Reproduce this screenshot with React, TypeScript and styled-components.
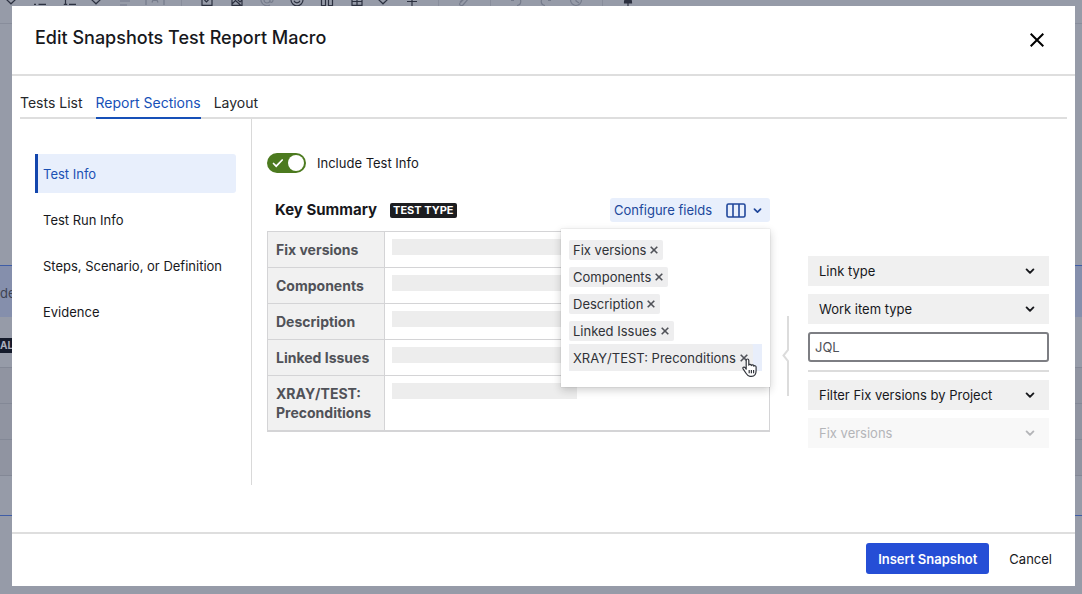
import React, { useState } from "react";
import styled, { createGlobalStyle, css } from "styled-components";

const GlobalStyle = createGlobalStyle`
  *, *::before, *::after { box-sizing: border-box; }
  body { margin: 0; background: #969ba8; }
  body, button, input, select {
    font-family: Inter, "Liberation Sans", sans-serif;
    font-size: 13px;
    line-height: 20px;
    color: #17181c;
  }
  button { border: 0; background: none; padding: 0; cursor: pointer; }
`;

/* Stage: the editor page with the dialog stacked on top of it */

const Stage = styled.div`
  display: grid;
  grid-template-columns: minmax(0, 1fr);
  min-height: 100vh;
  > * { grid-area: 1 / 1; }
`;

const EditorPage = styled.div`
  overflow: hidden;
  background: #969ba8;
`;

const Toolbar = styled.div`
  display: flex;
  align-items: center;
  height: 47px;
  margin-top: -23px;
  border-bottom: 1px solid #888d9b;
`;

const ToolSlot = styled.span<{ $kind?: "chevron" | "divider"; $faded?: boolean }>`
  display: flex;
  justify-content: center;
  flex: none;
  width: ${(p) => (p.$kind ? 22 : 30)}px;
  margin-right: ${(p) => (p.$kind === "chevron" ? 3 : 0)}px;
  color: ${(p) => (p.$faded ? "#757b8b" : "#2c3140")};
  svg { display: block; }
`;

const ToolDivider = styled.span`
  width: 1px;
  height: 24px;
  background: #888d9b;
`;

const MacroBlock = styled.div`
  margin-top: 241px;
  height: 251px;
  border-top: 1px solid #3f5da6;
  border-bottom: 1px solid #3f5da6;
`;

const MacroBar = styled.div`
  height: 51px;
  padding-top: 18px;
  background: #858fac;
  color: #3d4353;
  line-height: 18px;
`;

const MacroRow = styled.div<{ $height: number; $shade?: boolean }>`
  height: ${(p) => p.$height}px;
  border-bottom: 1px solid #838896;
  background: ${(p) => (p.$shade ? "#9094a1" : "transparent")};
`;

const ManualLozenge = styled.span`
  display: block;
  width: 14px;
  height: 15px;
  background: #151b2b;
  color: #a9aebb;
  font-size: 10px;
  font-weight: 700;
  line-height: 15px;
`;

const MacroBadgeRow = styled(MacroRow)`
  padding-top: 21px;
`;

/* Dialog */

const Dialog = styled.section`
  display: flex;
  flex-direction: column;
  margin: 6px 7px 8px 12px;
  background: #fff;
`;

const DialogHeader = styled.header`
  display: flex;
  align-items: center;
  justify-content: space-between;
  padding: 18px 29px 18px 23px;
  border-bottom: 2px solid #dedede;
`;

const Title = styled.h1`
  margin: 0;
  padding-bottom: 4px;
  font-size: 18px;
  font-weight: 500;
  line-height: 28px;
`;

const CloseButton = styled.button`
  display: flex;
  padding: 2px;
  color: #000;
`;

const DialogBody = styled.div`
  flex: 1;
  padding: 0 8px 46px;
`;

const TabList = styled.div`
  display: flex;
  gap: 13px;
  padding-top: 16px;
  border-bottom: 2px solid #dedede;
`;

const Tab = styled.button<{ $active: boolean }>`
  height: 27px;
  margin-bottom: -2px;
  padding-bottom: 4px;
  border-bottom: 2px solid ${(p) => (p.$active ? "#1650b8" : "transparent")};
  color: ${(p) => (p.$active ? "#1650b8" : "#26272b")};
  font-size: 14px;
`;

const Columns = styled.div`
  display: flex;
  align-items: flex-start;
`;

const SideNav = styled.nav`
  display: flex;
  flex-direction: column;
  gap: 7px;
  flex: none;
  width: 232px;
  min-height: 366px;
  padding: 35px 15px;
  border-right: 1px solid #d9d9d9;
`;

const NavItem = styled.button<{ $active: boolean }>`
  height: 39px;
  padding: 0 5px;
  border-left: 3px solid ${(p) => (p.$active ? "#1346ad" : "transparent")};
  border-radius: 0 3px 3px 0;
  background: ${(p) => (p.$active ? "#e8effc" : "transparent")};
  color: ${(p) => (p.$active ? "#1a50b4" : "#17181c")};
  text-align: left;
  white-space: nowrap;
`;

const Preview = styled.main`
  flex: 1;
  min-width: 0;
  padding: 34px 0 0 15px;
`;

const ToggleLabel = styled.label`
  display: flex;
  align-items: center;
  gap: 11px;
  height: 20px;
`;

const ToggleInput = styled.input`
  appearance: none;
  width: 39px;
  height: 20px;
  margin: 0;
  border-radius: 10px;
  background: #4c7a1f;
  display: grid;
  align-items: center;
  &::after {
    content: "";
    grid-area: 1 / 1;
    width: 16px;
    height: 16px;
    margin-left: 21px;
    border-radius: 50%;
    background: #fff;
  }
  &:not(:checked) { background: #777; }
  &:not(:checked)::after { margin-left: 2px; }
`;

const ToggleTrack = styled.span`
  display: grid;
  align-items: center;
  > * { grid-area: 1 / 1; }
  svg { margin-left: 5px; pointer-events: none; z-index: 1; }
`;

const SummaryBar = styled.div`
  display: flex;
  align-items: center;
  height: 24px;
  margin: 25px 0 9px;
  padding-left: 8px;
`;

const SummaryTitle = styled.h2`
  margin: 0 13px 0 0;
  font-size: 15px;
  font-weight: 700;
  line-height: 20px;
`;

const TypeLozenge = styled.span`
  padding: 0 3px;
  border-radius: 2px;
  background: #1c1d20;
  color: #fff;
  font-size: 11px;
  font-weight: 700;
  line-height: 15px;
`;

const FieldPicker = styled.div`
  position: relative;
  margin-left: auto;
`;

const PickerButton = styled.button`
  display: flex;
  align-items: center;
  height: 24px;
  padding: 0 8px 0 4px;
  border-radius: 3px;
  background: #e8effc;
  color: #20479b;
  svg:first-of-type { margin: 0 7px 0 14px; }
`;

const PickerMenu = styled.ul`
  position: absolute;
  top: 31px;
  right: 0;
  z-index: 2;
  width: 209px;
  margin: 0;
  padding: 7px 8px 16px;
  list-style: none;
  background: #fff;
  box-shadow: 0 3px 8px rgba(30, 31, 33, 0.22), 0 0 1px rgba(30, 31, 33, 0.25);
`;

const PickerRow = styled.li<{ $active?: boolean }>`
  display: flex;
  align-items: center;
  height: 27px;
  background: ${(p) => (p.$active ? "#e8eefb" : "transparent")};
`;

const FieldTag = styled.span<{ $plain?: boolean }>`
  display: flex;
  align-items: center;
  gap: 4px;
  height: 20px;
  padding: 0 5px 0 4px;
  border-radius: 2px;
  background: #eeeeef;
  color: #303237;
  white-space: nowrap;
  ${(p) =>
    p.$plain &&
    css`
      height: 27px;
    `}
`;

const RemoveButton = styled.button`
  display: flex;
  color: #505258;
`;

const HandPointer = styled.svg`
  position: absolute;
  right: 12px;
  bottom: 9px;
  pointer-events: none;
`;

const FieldTable = styled.table`
  width: 100%;
  border-collapse: collapse;
  border: 1px solid #d4d4d6;
  border-bottom-width: 2px;
  th, td { border: 1px solid #d4d4d6; vertical-align: top; }
  th {
    width: 117px;
    padding: 8px;
    background: #f1f1f1;
    color: #505258;
    font-size: 14px;
    font-weight: 700;
    line-height: 19px;
    text-align: left;
  }
  td { padding: 7px; }
`;

const Placeholder = styled.div`
  width: 185px;
  max-width: 100%;
  height: 16px;
  background: #ededed;
`;

const FilterGroup = styled.div`
  display: flex;
  flex: none;
  padding: 137px 18px 0 12px;
`;

const Bracket = styled.svg`
  flex: none;
  margin: 60px 19px 0 0;
`;

const Filters = styled.form`
  display: flex;
  flex-direction: column;
  gap: 8px;
  width: 241px;
`;

const SelectBox = styled.div<{ $disabled?: boolean }>`
  display: grid;
  align-items: center;
  height: 30px;
  background: ${(p) => (p.$disabled ? "#f8f8f8" : "#f0f0f0")};
  color: ${(p) => (p.$disabled ? "#b4b5b8" : "#17181c")};
  > * { grid-area: 1 / 1; }
  svg { justify-self: end; margin-right: 14px; pointer-events: none; }
`;

const Select = styled.select`
  appearance: none;
  width: 100%;
  height: 30px;
  padding: 0 32px 0 11px;
  border: 0;
  background: transparent;
  color: inherit;
  opacity: 1;
`;

const QueryInput = styled.input`
  height: 30px;
  padding: 0 5px;
  border: 2px solid #7d7e83;
  border-radius: 3px;
  background: #fff;
  &::placeholder { color: #505258; opacity: 1; }
`;

const Rule = styled.hr`
  width: 100%;
  height: 2px;
  margin: 0;
  border: 0;
  background: #dcdcdc;
`;

const DialogFooter = styled.footer`
  display: flex;
  justify-content: flex-end;
  gap: 8px;
  padding: 9px 11px 12px;
  border-top: 2px solid #dedede;
`;

const FooterButton = styled.button<{ $primary?: boolean }>`
  height: 31px;
  padding: 0 12px;
  border-radius: 3px;
  ${(p) =>
    p.$primary &&
    css`
      background: #254ed6;
      color: #fff;
      font-weight: 600;
    `}
`;

/* Icons */

const Chevron = ({ size = 9 }: { size?: number }) => (
  <svg width={size} height={size} viewBox="0 0 10 10" fill="none" stroke="currentColor" strokeWidth="1.9" strokeLinecap="round" strokeLinejoin="round" aria-hidden="true">
    <path d="M1.6 3.4 5 6.8l3.4-3.4" />
  </svg>
);

const Cross = ({ size, weight }: { size: number; weight: number }) => (
  <svg width={size} height={size} viewBox={`0 0 ${size} ${size}`} fill="none" stroke="currentColor" strokeWidth={weight} aria-hidden="true">
    <path d={`M.7.7 ${size - 0.7} ${size - 0.7}M${size - 0.7}.7.7 ${size - 0.7}`} />
  </svg>
);

const toolPaths: Record<string, React.ReactNode> = {
  chevron: <path d="m4.500 8.500 4.500 4.300 4.500-4.300" />,
  bullets: <path d="M3 13.300h2M7.500 13.300H15M7.500 8H15" />,
  numbers: <path d="M4.500 9v4.500M2.800 13.300h3.400M8 13.300h7M8 8h7" />,
  align: <path d="M4 10h10M4 14h7" />,
  letter: <path d="M0-2v16M18-2v16M6 11.500 9 4l3 7.500M7 9.500h4" />,
  check: <path d="M4 3h10v11.300H4zM6.500 9l2 2 4-4.500" />,
  image: <path d="M4 3h10v11.300H4zM4 13l3.500-3.500 5 4.500M9.500 8.500l2.500 2.500 2-2" />,
  mention: <path d="M12 6v4c0 2 3 2 3-1a6 6 0 1 0-3 5M12 9a3 3 0 1 1-6 0 3 3 0 0 1 6 0" />,
  emoji: <path d="M15 8.800a6 6 0 1 1-12 0 6 6 0 0 1 12 0M6 9.800c1 2.700 5 2.700 6 0" />,
  layout: <path d="M3.500 3h4v11.500h-4zM10.500 3h4v11.500h-4z" />,
  table: <path d="M4 3h10v11.300H4zM4 10.500h10M9 3v11" />,
  plus: <path d="M9 5v10M4 10.500h10" />,
  clip: <path d="m5 11 6-6c2-2 4.500 0 3 2l-6 7c-1.500 1.500-4.500 0-3-2l5-5" />,
  undo: <path d="M4 9.500h3M10 7c5 0 5 7 0 7.500" />,
  redo: <path d="M14 9.500h-3M8 7c-5 0-5 7 0 7.500" />,
  clock: <path d="M3.500 9a5.500 5.500 0 1 0 5.500-5.500M9 6v4l3 2" />,
  publish: <path d="M5.500 12c0-3 1.500-5 3.500-5s3.500 2 3.500 5zM9 11v5" fill="currentColor" />,
};

type Tool = { icon: string; kind?: "chevron" | "divider"; faded?: boolean };

const tools: Tool[] = [
  { icon: "chevron", kind: "chevron" },
  { icon: "bullets" },
  { icon: "numbers" },
  { icon: "chevron", kind: "chevron" },
  { icon: "align", faded: true },
  { icon: "letter", faded: true },
  { icon: "", kind: "divider" },
  { icon: "check" },
  { icon: "image" },
  { icon: "mention", faded: true },
  { icon: "emoji" },
  { icon: "layout" },
  { icon: "table" },
  { icon: "chevron", kind: "chevron" },
  { icon: "plus" },
  { icon: "", kind: "divider" },
  { icon: "clip", faded: true },
  { icon: "", kind: "divider" },
  { icon: "undo", faded: true },
  { icon: "redo", faded: true },
  { icon: "clock", faded: true },
  { icon: "", kind: "divider" },
  { icon: "publish" },
];

const tabs = ["Tests List", "Report Sections", "Layout"];
const sections = ["Test Info", "Test Run Info", "Steps, Scenario, or Definition", "Evidence"];
const fields = ["Fix versions", "Components", "Description", "Linked Issues", "XRAY/TEST: Preconditions"];

const FilterSelect = ({ label, disabled }: { label: string; disabled?: boolean }) => (
  <SelectBox $disabled={disabled}>
    <Select aria-label={label} disabled={disabled}>
      <option>{label}</option>
    </Select>
    <Chevron size={10} />
  </SelectBox>
);

export default function App() {
  const [tab, setTab] = useState("Report Sections");
  const [section, setSection] = useState("Test Info");
  const [included, setIncluded] = useState(true);

  return (
    <>
      <GlobalStyle />
      <Stage>
        <EditorPage aria-hidden="true">
          <Toolbar>
            {tools.map((tool, i) => (
              <ToolSlot key={i} $kind={tool.kind} $faded={tool.faded}>
                {tool.kind === "divider" ? (
                  <ToolDivider />
                ) : (
                  <svg width="18" height="18" viewBox="0 0 18 18" fill="none" stroke="currentColor" strokeWidth="1.200" overflow="visible">
                    {toolPaths[tool.icon]}
                  </svg>
                )}
              </ToolSlot>
            ))}
          </Toolbar>
          <MacroBlock>
            <MacroBar>de</MacroBar>
            <MacroBadgeRow $height={51}>
              <ManualLozenge>AL</ManualLozenge>
            </MacroBadgeRow>
            <MacroRow $height={36} $shade />
            <MacroRow $height={36} $shade />
            <MacroRow $height={36} $shade />
          </MacroBlock>
        </EditorPage>

        <Dialog role="dialog" aria-labelledby="dialog-title">
          <DialogHeader>
            <Title id="dialog-title">Edit Snapshots Test Report Macro</Title>
            <CloseButton aria-label="Close">
              <Cross size={14} weight={2} />
            </CloseButton>
          </DialogHeader>

          <DialogBody>
            <TabList role="tablist">
              {tabs.map((name) => (
                <Tab key={name} role="tab" aria-selected={tab === name} $active={tab === name} onClick={() => setTab(name)}>
                  {name}
                </Tab>
              ))}
            </TabList>

            <Columns>
              <SideNav>
                {sections.map((name) => (
                  <NavItem key={name} $active={section === name} onClick={() => setSection(name)}>
                    {name}
                  </NavItem>
                ))}
              </SideNav>

              <Preview>
                <ToggleLabel>
                  <ToggleTrack>
                    <ToggleInput type="checkbox" checked={included} onChange={(e) => setIncluded(e.target.checked)} />
                    {included && (
                      <svg width="12" height="10" viewBox="0 0 12 10" fill="none" stroke="#fff" strokeWidth="1.700" strokeLinecap="round" aria-hidden="true">
                        <path d="m1.500 5.500 2.700 2.700 6-6.200" />
                      </svg>
                    )}
                  </ToggleTrack>
                  Include Test Info
                </ToggleLabel>

                <SummaryBar>
                  <SummaryTitle>Key Summary</SummaryTitle>
                  <TypeLozenge>TEST TYPE</TypeLozenge>
                  <FieldPicker>
                    <PickerButton aria-expanded="true">
                      Configure fields
                      <svg width="20" height="15" viewBox="0 0 20 15" fill="none" stroke="currentColor" strokeWidth="1.600" aria-hidden="true">
                        <rect x="1" y="1" width="18" height="13" rx="1.500" />
                        <path d="M7 1v13M13 1v13" />
                      </svg>
                      <Chevron />
                    </PickerButton>
                    <PickerMenu>
                      {fields.map((name, i) => {
                        const hovered = i === fields.length - 1;
                        return (
                          <PickerRow key={name} $active={hovered}>
                            <FieldTag $plain={hovered}>
                              {name}
                              <RemoveButton aria-label={`Remove ${name}`}>
                                <Cross size={8} weight={1.6} />
                              </RemoveButton>
                            </FieldTag>
                          </PickerRow>
                        );
                      })}
                      <HandPointer width="16" height="20" viewBox="0 0 16 20" fill="#fff" stroke="#33363d" strokeWidth="1.200" strokeLinejoin="round" aria-hidden="true">
                        <path d="M4.200 11.200V2.400c0-1.900 2.600-1.900 2.600 0v4.800c.3-1.200 2.500-1.100 2.500.4.400-1.100 2.500-.9 2.500.6.500-.9 2.300-.6 2.300.8v3.400c0 3.600-1.700 5.900-4.600 5.900H8c-2 0-2.800-1.200-4-3.100L1.100 10.800c-.8-1.300.9-2.400 1.900-1.300zM7.200 12v3.300M9.400 12v3.300M11.600 12v3.300" />
                      </HandPointer>
                    </PickerMenu>
                  </FieldPicker>
                </SummaryBar>

                <FieldTable>
                  <tbody>
                    {fields.map((name) => (
                      <tr key={name}>
                        <th scope="row">{name}</th>
                        <td>
                          <Placeholder />
                        </td>
                      </tr>
                    ))}
                  </tbody>
                </FieldTable>
              </Preview>

              <FilterGroup>
                <Bracket width="7" height="80" viewBox="0 0 7 80" fill="none" stroke="#dcdcdc" strokeWidth="2" aria-hidden="true">
                  <path d="M6 0v34L1.500 39.500 6 45v35" />
                </Bracket>
                <Filters>
                  <FilterSelect label="Link type" />
                  <FilterSelect label="Work item type" />
                  <QueryInput aria-label="JQL" placeholder="JQL" />
                  <Rule />
                  <FilterSelect label="Filter Fix versions by Project" />
                  <FilterSelect label="Fix versions" disabled />
                </Filters>
              </FilterGroup>
            </Columns>
          </DialogBody>

          <DialogFooter>
            <FooterButton $primary>Insert Snapshot</FooterButton>
            <FooterButton>Cancel</FooterButton>
          </DialogFooter>
        </Dialog>
      </Stage>
    </>
  );
}
